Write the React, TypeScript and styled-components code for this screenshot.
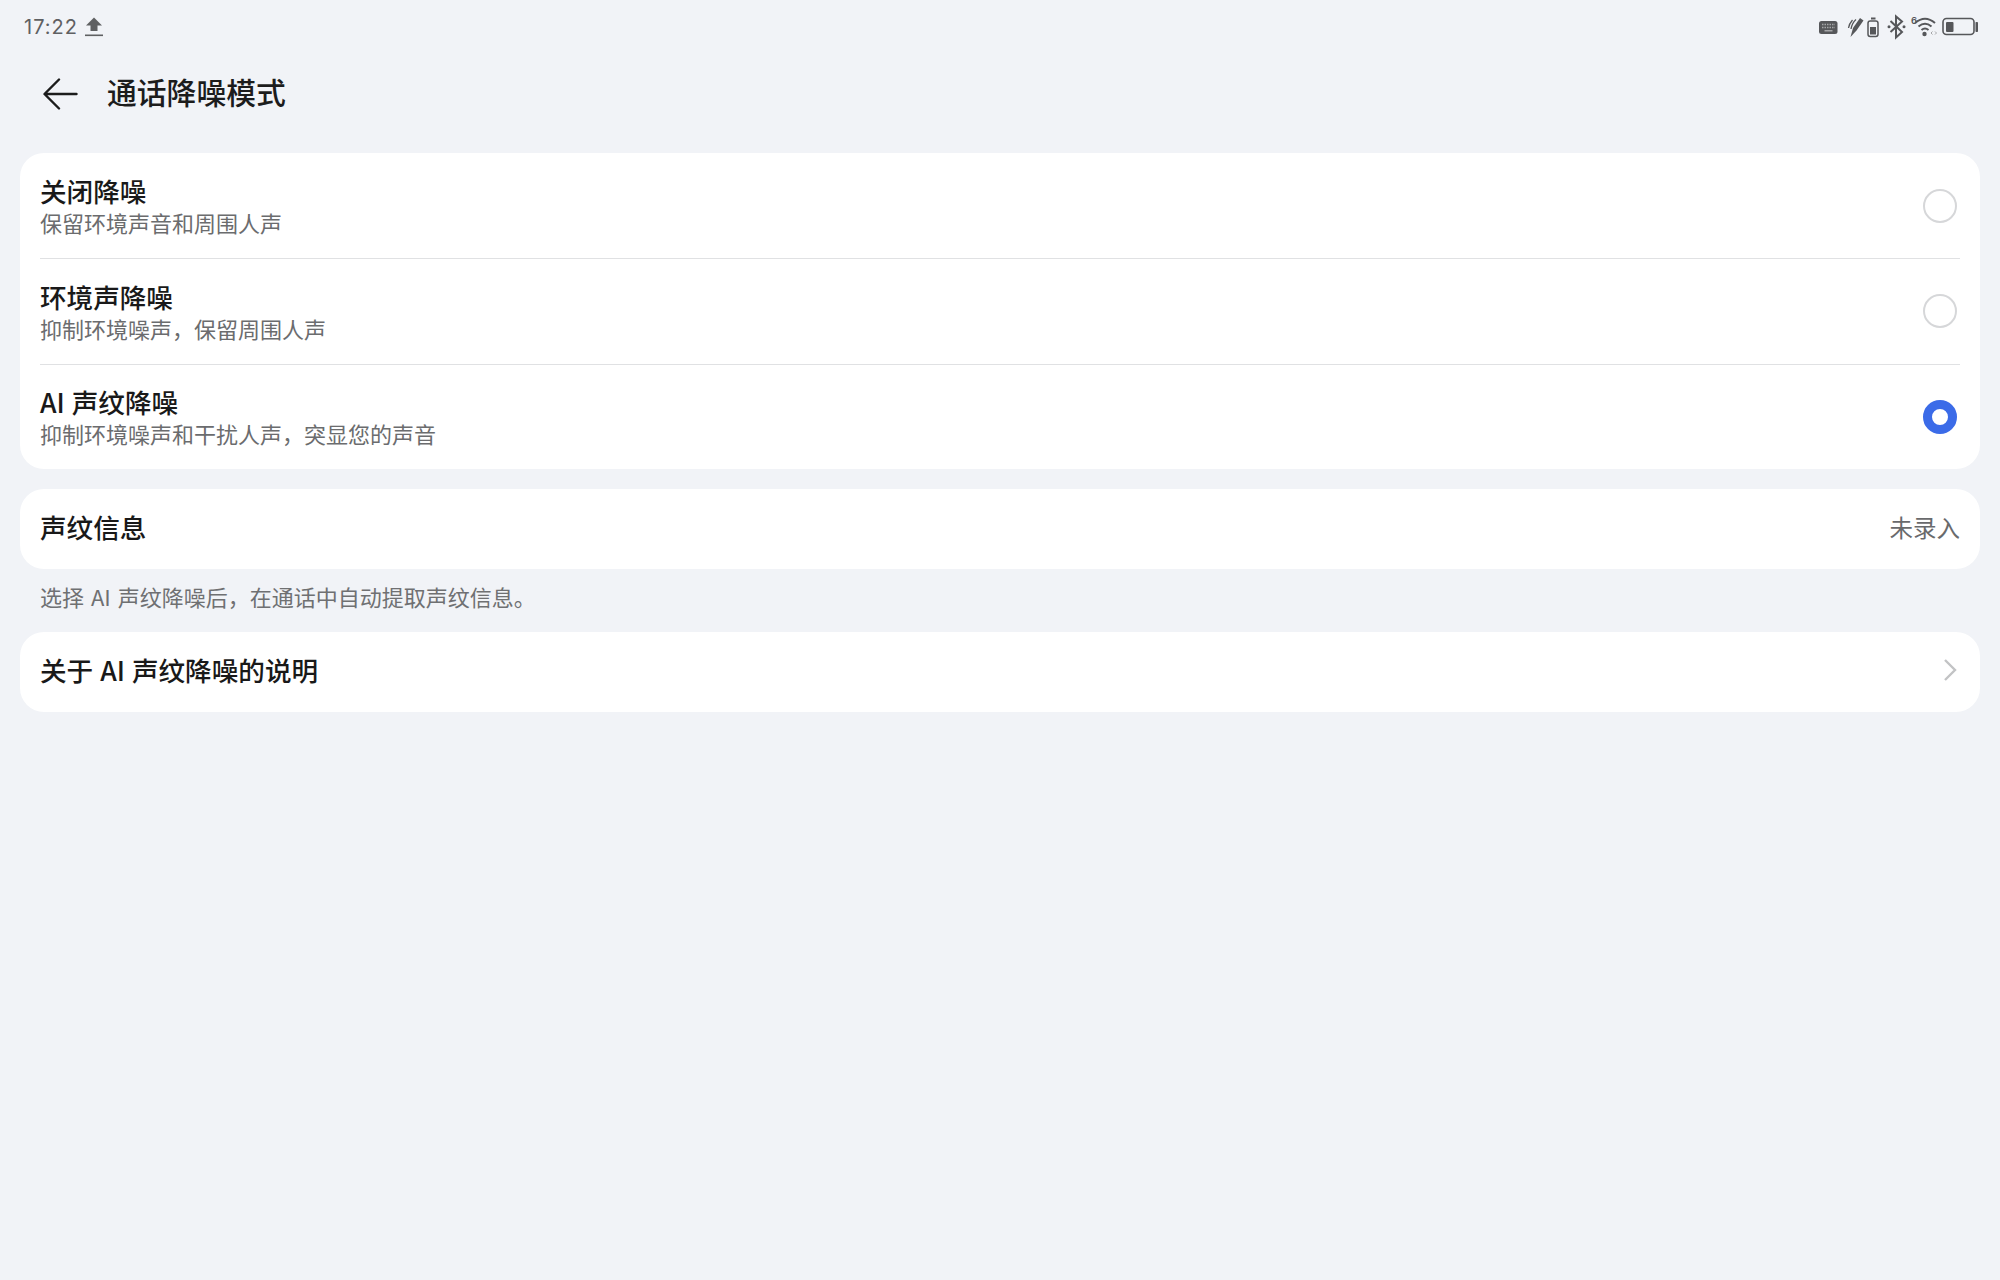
import styled, { createGlobalStyle } from "styled-components";

const GlobalStyle = createGlobalStyle`
  html, body {
    margin: 0;
    padding: 0;
    background: #f1f3f7;
  }
  * {
    box-sizing: border-box;
  }
`;

const Page = styled.div`
  width: 2000px;
  height: 1280px;
  overflow: hidden;
  background: #f1f3f7;
  color: #191919;
  font-family: "Noto Sans CJK SC", "Inter", sans-serif;
  padding: 0 20px;
`;

const StatusBar = styled.div`
  height: 54px;
  margin: 0 -20px;
  padding: 0 21px 0 24px;
  display: flex;
  align-items: center;
  justify-content: space-between;
`;

const Clock = styled.div`
  display: flex;
  align-items: center;
  gap: 7px;
  font-family: "Inter", sans-serif;
  font-size: 20px;
  letter-spacing: 1px;
  color: #5f6062;
`;

const StatusIcons = styled.div`
  display: flex;
  align-items: center;
`;

const Header = styled.div`
  height: 79px;
  display: flex;
  align-items: center;
  gap: 29px;
  padding-left: 23px;
`;

const BackIcon = styled.svg`
  width: 35px;
  height: 32px;
  display: block;
`;

const PageTitle = styled.h1`
  margin: 0 0 5px;
  font-size: 29.8px;
  font-weight: 500;
  line-height: 40px;
  color: #1c1c1c;
`;

const Card = styled.div<{ $top: number }>`
  background: #ffffff;
  border-radius: 24px;
  margin-top: ${(p) => p.$top}px;
  padding: 0 20px;
`;

const OptionRow = styled.div`
  height: 105px;
  display: flex;
  align-items: center;
  justify-content: space-between;

  & + & {
    border-top: 1px solid #e0e1e3;
    height: 105.5px;
  }
`;

const OptionText = styled.div`
  display: flex;
  flex-direction: column;
`;

const OptionTitle = styled.div`
  font-size: 26.6px;
  font-weight: 500;
  line-height: 34px;
  word-spacing: 1px;
  color: #191919;
`;

const OptionSub = styled.div`
  font-size: 22px;
  line-height: 29px;
  color: #6b6c6e;
`;

const Radio = styled.div<{ $on?: boolean }>`
  width: 34px;
  height: 34px;
  border-radius: 50%;
  margin-right: 3px;
  background: #fff;
  border: ${(p) => (p.$on ? "9px solid #3b6be8" : "2.5px solid #d6d7d9")};
`;

const LinkRow = styled.div`
  height: 80px;
  padding-bottom: 4px;
  display: flex;
  align-items: center;
  justify-content: space-between;
`;

const LinkTitle = styled.div`
  font-size: 26.6px;
  font-weight: 500;
  line-height: 34px;
  word-spacing: 1px;
  color: #191919;
`;

const LinkValue = styled.div`
  font-size: 23.5px;
  color: #696a6c;
`;

const Chevron = styled.svg`
  width: 14px;
  height: 24px;
  display: block;
  margin-right: 3px;
`;

const Caption = styled.div`
  height: 63px;
  padding: 0 0 9px 20px;
  display: flex;
  align-items: center;
  font-size: 22px;
  word-spacing: 2px;
  color: #6f7072;
  margin-bottom: -20px;
`;

const App = () => {
  return (
    <>
      <GlobalStyle />
      <Page>
        <StatusBar>
          <Clock>
            17:22
            <svg width="18" height="20" viewBox="0 0 18 20">
              <path d="M9 0.500 17 8.500H12.500V14H5.500V8.500H1z" fill="#5f6062" />
              <rect x="0" y="17.500" width="18" height="1.600" fill="#5f6062" />
            </svg>
          </Clock>
          <StatusIcons>
            <svg width="160" height="54" viewBox="0 0 160 54">
              {/* keyboard */}
              <rect x="0" y="21" width="18.500" height="13" rx="2.500" fill="#56575a" />
              <path d="M3 24.500h13M3 27.500h13" stroke="#a5a6a8" strokeWidth="1.500" strokeDasharray="1.500 1" />
              <rect x="5.500" y="30" width="8" height="1.500" fill="#a5a6a8" />
              {/* pen */}
              <path d="M31.500 37 34 28 41 18 44.500 20.500 37.500 30.500z" fill="#56575a" />
              <path d="M33.500 20Q30 24 29.500 28M37 19.500Q33 23 32 29" stroke="#56575a" strokeWidth="1.300" fill="none" />
              {/* small battery */}
              <rect x="49" y="21" width="10" height="15.500" rx="2.200" fill="none" stroke="#56575a" strokeWidth="1.500" />
              <rect x="52" y="17.500" width="4.500" height="2" fill="#56575a" />
              <rect x="51" y="27" width="6" height="7.500" fill="#56575a" />
              {/* bluetooth */}
              <path d="M71.500 21 83 32 77 37.500V16.500L83 21.500 71.500 32" fill="none" stroke="#56575a" strokeWidth="2" />
              <circle cx="70" cy="26.800" r="1.500" fill="#56575a" />
              <circle cx="85" cy="26.800" r="1.500" fill="#56575a" />
              {/* wifi */}
              <text x="92" y="24" fontFamily="Inter, sans-serif" fontSize="9.500" fontWeight="600" fill="#56575a">6</text>
              <path d="M96 23Q106 14.500 116 23M99.500 26.500Q106 21 112.500 26.500M102.500 30Q106 27 109.500 30" fill="none" stroke="#56575a" strokeWidth="2" />
              <circle cx="105.500" cy="34" r="2.200" fill="#56575a" />
              <path d="M113.500 31.500 112 33 113.500 34.500M116 31.500 117.500 33 116 34.500" fill="none" stroke="#a5a6a8" strokeWidth="1" />
              {/* battery */}
              <rect x="124" y="18.500" width="31" height="16" rx="3.500" fill="none" stroke="#56575a" strokeWidth="1.600" />
              <rect x="127" y="22" width="7.500" height="10" rx="1" fill="#56575a" />
              <rect x="156.500" y="22" width="2.500" height="10" rx="0.800" fill="#56575a" />
            </svg>
          </StatusIcons>
        </StatusBar>

        <Header>
          <BackIcon viewBox="0 0 35 32" fill="none">
            <path d="M33.500 16H2M16 1.500 1.500 16 16 30.500" stroke="#1c1c1c" strokeWidth="2.400" strokeLinecap="round" strokeLinejoin="round" />
          </BackIcon>
          <PageTitle>通话降噪模式</PageTitle>
        </Header>

        <Card $top={20}>
          <OptionRow>
            <OptionText>
              <OptionTitle>关闭降噪</OptionTitle>
              <OptionSub>保留环境声音和周围人声</OptionSub>
            </OptionText>
            <Radio />
          </OptionRow>
          <OptionRow>
            <OptionText>
              <OptionTitle>环境声降噪</OptionTitle>
              <OptionSub>抑制环境噪声，保留周围人声</OptionSub>
            </OptionText>
            <Radio />
          </OptionRow>
          <OptionRow>
            <OptionText>
              <OptionTitle>AI 声纹降噪</OptionTitle>
              <OptionSub>抑制环境噪声和干扰人声，突显您的声音</OptionSub>
            </OptionText>
            <Radio $on />
          </OptionRow>
        </Card>

        <Card $top={20}>
          <LinkRow>
            <LinkTitle>声纹信息</LinkTitle>
            <LinkValue>未录入</LinkValue>
          </LinkRow>
        </Card>

        <Caption>选择 AI 声纹降噪后，在通话中自动提取声纹信息。</Caption>

        <Card $top={20}>
          <LinkRow>
            <LinkTitle>关于 AI 声纹降噪的说明</LinkTitle>
            <Chevron viewBox="0 0 14 24" fill="none">
              <path d="M2 2 12 12 2 22" stroke="#c2c3c5" strokeWidth="2.400" />
            </Chevron>
          </LinkRow>
        </Card>
      </Page>
    </>
  );
};

export default App;
